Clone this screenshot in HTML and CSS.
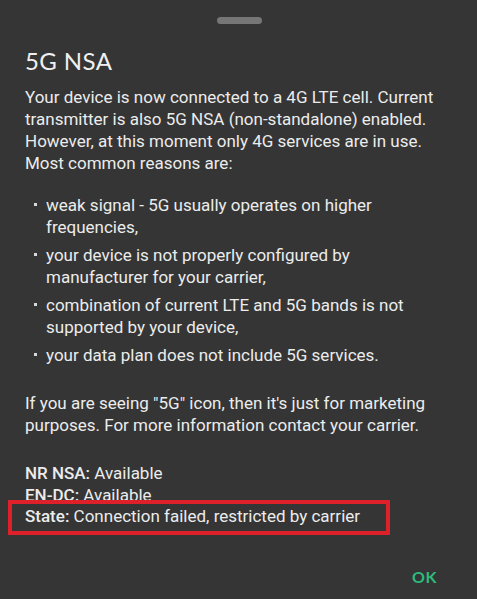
FILE: index.html
```html
<!DOCTYPE html>
<html>
<head>
<meta charset="utf-8">
<link rel="stylesheet" href="styles.css">
</head>
<body>
<div class="sheet">
  <div class="handle"></div>
  <h1 class="title">5G NSA</h1>
  <p class="text">Your device is now connected to a 4G LTE cell. Current transmitter is also 5G NSA (non-standalone) enabled. However, at this moment only 4G services are in use. Most common reasons are:</p>
  <ul class="reasons">
    <li>weak signal - 5G usually operates on higher frequencies,</li>
    <li>your device is not properly configured by manufacturer for your carrier,</li>
    <li>combination of current LTE and 5G bands is not supported by your device,</li>
    <li>your data plan does not include 5G services.</li>
  </ul>
  <p class="text">If you are seeing "5G" icon, then it's just for marketing purposes. For more information contact your carrier.</p>
  <div class="status">
    <div class="row"><b>NR NSA:</b> Available</div>
    <div class="row"><b>EN-DC:</b> Available</div>
    <div class="row highlight"><b>State:</b> Connection failed, restricted by carrier</div>
  </div>
  <div class="actions"><span class="ok">OK</span></div>
</div>
</body>
</html>
```
FILE: styles.css
```css
html, body {
  margin: 0;
  padding: 0;
  background: #353535;
}
.sheet {
  width: 477px;
  height: 599px;
  box-sizing: border-box;
  padding: 17px 0 0 25px;
  font-family: Roboto, "Liberation Sans", sans-serif;
  color: #ececec;
  font-size: 17px;
  line-height: 22px;
}
.handle {
  width: 45px;
  height: 7px;
  border-radius: 4px;
  background: #767676;
  margin: 0 0 0 192px;
}
.title {
  margin: 22px 0 0 0;
  font-family: Lato, "Noto Sans", sans-serif;
  font-weight: 400;
  font-size: 24px;
  letter-spacing: 0.4px;
  line-height: 30px;
  color: #f0f0f0;
}
.text {
  margin: 10px 0 0 0;
  padding-right: 20px;
}
.reasons {
  list-style: none;
  margin: 20px 0 0 0;
  padding: 0 40px 0 21px;
  display: flex;
  flex-direction: column;
  gap: 6px;
}
.reasons li {
  position: relative;
}
.reasons li::before {
  content: "";
  position: absolute;
  left: -12px;
  top: 9px;
  width: 3px;
  height: 3px;
  background: #d8d8d8;
}
.reasons + .text {
  margin-top: 26px;
}
.status {
  margin-top: 26px;
  display: flex;
  flex-direction: column;
}
.row b {
  font-weight: 500;
}
.highlight {
  margin-left: -17px;
  width: 361px;
  border: 4px solid #dd2029;
  padding: 1px 0 4px 13px;
  margin-top: -6px;
}
.actions {
  display: flex;
  justify-content: flex-end;
  padding-right: 40px;
  margin-top: 31px;
}
.ok {
  font-family: Lato, "Noto Sans", sans-serif;
  font-weight: 700;
  font-size: 16px;
  color: #2dbb7c;
  letter-spacing: 0.5px;
}
```
